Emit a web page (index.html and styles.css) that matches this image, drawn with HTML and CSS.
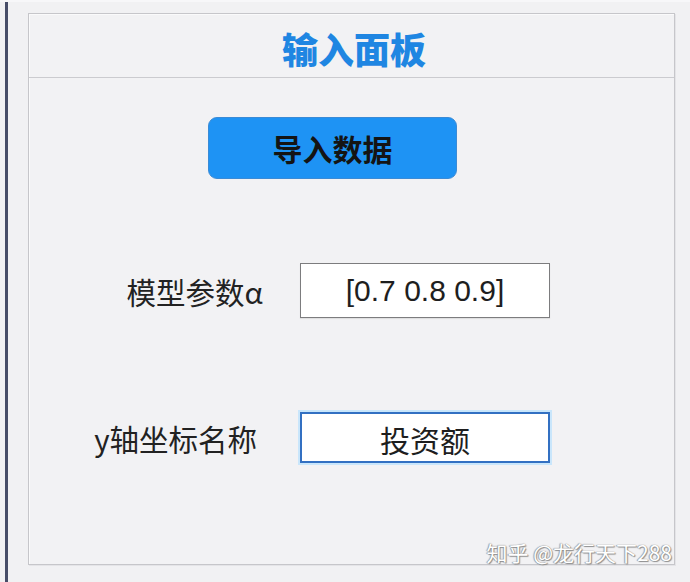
FILE: index.html
```html
<!DOCTYPE html>
<html lang="zh">
<head>
<meta charset="utf-8">
<title>输入面板</title>
<link rel="stylesheet" href="styles.css">
</head>
<body>
<div class="screen">
  <div class="edge"></div>
  <div class="main">
    <section class="panel">
      <h1 class="panel-title">输入面板</h1>
      <div class="panel-body">
        <button class="btn" type="button">导入数据</button>
        <div class="field field-alpha">
          <span class="label">模型参数α</span>
          <div class="box box-alpha">[0.7 0.8 0.9]</div>
        </div>
        <div class="field field-y">
          <span class="label">y轴坐标名称</span>
          <div class="box box-focus">投资额</div>
        </div>
      </div>
      <div class="watermark">知乎 @龙行天下288</div>
    </section>
  </div>
</div>
</body>
</html>
```
FILE: styles.css
```css
html, body {
  margin: 0;
  padding: 0;
}
body {
  background: #f1f1f3;
  font-family: "Noto Sans CJK SC", "Noto Sans", sans-serif;
  overflow: hidden;
}
.screen {
  display: flex;
  width: 690px;
  height: 582px;
  box-sizing: border-box;
  padding-left: 5px;
  border-top: 2px solid #f7f7f9;
}
.edge {
  width: 3px;
  background: #474d68;
}
.main {
  flex: 1;
  padding: 11px 15px 17px 20px;
  display: flex;
}
.panel {
  flex: 1;
  position: relative;
  display: flex;
  flex-direction: column;
  border: 1px solid #c6c6ca;
  box-shadow: inset 1px 1px 0 #fafafb, 1px 1px 0 #e4e4e7;
  background: #f2f2f4;
}
.panel-title {
  margin: 0;
  height: 64px;
  box-sizing: border-box;
  padding: 4px 0 0 5px;
  border-bottom: 1px solid #cbcbcf;
  display: flex;
  align-items: center;
  justify-content: center;
  font-size: 36px;
  font-weight: 900;
  color: #1f86e2;
}
.panel-body {
  flex: 1;
  padding-top: 39px;
}
.btn {
  display: block;
  margin-left: 179px;
  width: 249px;
  height: 62px;
  border: 1px solid #3b8bd6;
  border-radius: 9px;
  background: #1e93f4;
  color: #141414;
  font-family: "Noto Sans CJK SC", sans-serif;
  font-size: 30px;
  font-weight: 700;
  padding: 0;
}
.field {
  display: flex;
  align-items: center;
}
.field-alpha {
  margin-top: 84px;
}
.field-y {
  margin-top: 94px;
}
.label {
  width: 271px;
  box-sizing: border-box;
  text-align: right;
  font-size: 29.5px;
  color: #222;
}
.field-alpha .label {
  padding-right: 37px;
}
.field-y .label {
  padding-right: 43px;
}
.box {
  width: 250px;
  box-sizing: border-box;
  background: #fff;
  border: 1px solid #7c7c7e;
  display: flex;
  align-items: center;
  justify-content: center;
  color: #1e1e1e;
  font-size: 30px;
}
.box-alpha {
  height: 55px;
  font-family: "Liberation Sans", Arial, sans-serif;
  box-shadow: 0 1px 1px rgba(0,0,0,0.08);
}
.box-focus {
  height: 51px;
  border: 2px solid #3270c2;
  box-shadow: 0 0 0 2px #c9e6fb;
  padding-top: 2px;
}
.watermark {
  position: absolute;
  right: 2px;
  bottom: -1px;
  font-size: 21px;
  line-height: 26px;
  color: #ffffff;
  text-shadow: 0 0 1px #7d7d7d, 1px 1px 1px #8f8f8f, -1px 0 1px #a8a8a8;
  white-space: nowrap;
}
```
